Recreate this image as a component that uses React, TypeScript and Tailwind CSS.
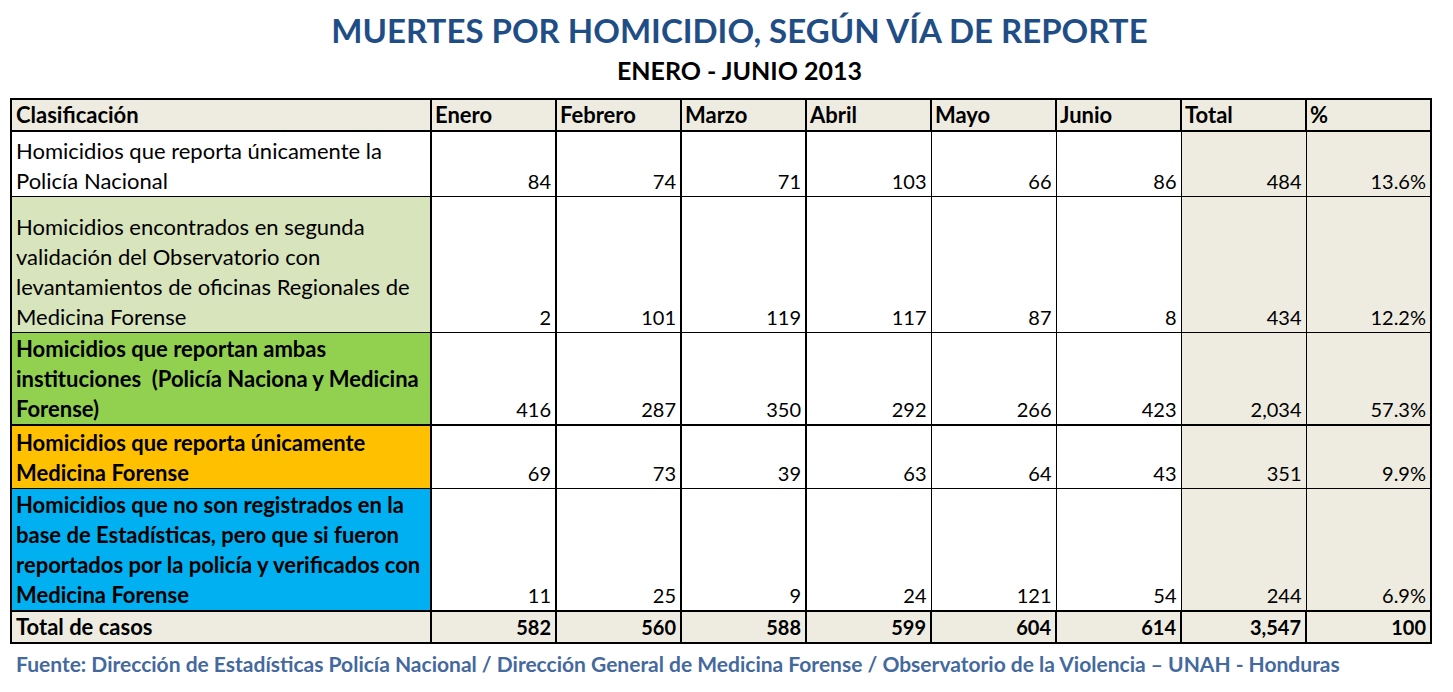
const months = ['Enero', 'Febrero', 'Marzo', 'Abril', 'Mayo', 'Junio'];

type Row = {
  label: string[];
  bold?: boolean;
  bg: string;
  values: string[];
  total: string;
  pct: string;
  h: string;
  thickTop?: boolean;
};

const rows: Row[] = [
  {
    label: ['Homicidios que reporta únicamente la', 'Policía Nacional'],
    bg: 'bg-white',
    values: ['84', '74', '71', '103', '66', '86'],
    total: '484',
    pct: '13.6%',
    h: 'h-[65px]',
  },
  {
    label: [
      'Homicidios encontrados en segunda',
      'validación del Observatorio con',
      'levantamientos de oficinas Regionales de',
      'Medicina Forense',
    ],
    bg: 'bg-[#d8e4bc]',
    values: ['2', '101', '119', '117', '87', '8'],
    total: '434',
    pct: '12.2%',
    h: 'h-[136px]',
  },
  {
    label: ['Homicidios que reportan ambas', 'instituciones  (Policía Naciona y Medicina', 'Forense)'],
    bold: true,
    bg: 'bg-[#92d050]',
    values: ['416', '287', '350', '292', '266', '423'],
    total: '2,034',
    pct: '57.3%',
    h: 'h-[93px]',
  },
  {
    label: ['Homicidios que reporta únicamente', 'Medicina Forense'],
    bold: true,
    bg: 'bg-[#ffc000]',
    values: ['69', '73', '39', '63', '64', '43'],
    total: '351',
    pct: '9.9%',
    h: 'h-[63px]',
    thickTop: true,
  },
  {
    label: [
      'Homicidios que no son registrados en la',
      'base de Estadísticas, pero que si fueron',
      'reportados por la policía y verificados con',
      'Medicina Forense',
    ],
    bold: true,
    bg: 'bg-[#00b0f0]',
    values: ['11', '25', '9', '24', '121', '54'],
    total: '244',
    pct: '6.9%',
    h: 'h-[123px]',
  },
];

const totals = ['582', '560', '588', '599', '604', '614', '3,547', '100'];

export default function App() {
  return (
    <div className="w-[1453px] h-[692px] bg-white font-['Lato',sans-serif] text-black">
      <h1 className="pt-[10px] pl-[26px] text-center text-[33px] leading-[40px] font-bold text-[#1f4e86]">
        MUERTES POR HOMICIDIO, SEGÚN VÍA DE REPORTE
      </h1>
      <h2 className="mt-[5px] pl-[26px] text-center text-[25px] leading-[30px] font-bold">ENERO - JUNIO 2013</h2>

      <table className="ml-[10px] mt-[13px] w-[1420px] table-fixed border-collapse border-2 border-black text-[20px] leading-[30px]">
        <colgroup>
          <col className="w-[420px]" />
          {months.map((m) => (
            <col key={m} className="w-[125px]" />
          ))}
          <col className="w-[125px]" />
          <col className="w-[125px]" />
        </colgroup>
        <thead>
          <tr className="h-[32px] bg-[#eeece1]">
            <th className="border-2 border-black px-[4px] py-0 text-left text-[22px] font-bold">Clasificación</th>
            {[...months, 'Total', '%'].map((m) => (
              <th key={m} className="border-2 border-black px-[3px] py-0 text-left text-[22px] font-bold">
                {m}
              </th>
            ))}
          </tr>
        </thead>
        <tbody>
          {rows.map((r, i) => (
            <tr key={i} className={`${r.h} ${r.thickTop ? 'border-t-2' : 'border-t'} border-black`}>
              <td
                className={`${r.bg} border-r-2 border-black px-[4px] py-0 align-bottom text-[22px] leading-[30px] ${r.bold ? 'font-bold' : ''}`}
              >
                {r.label.map((l, j) => (
                  <div key={j} className="whitespace-pre">
                    {l}
                  </div>
                ))}
              </td>
              {r.values.map((v, j) => (
                <td
                  key={j}
                  className={`${j < 3 ? 'border-r-2' : 'border-r'} border-black px-[4px] py-0 text-right align-bottom`}
                >
                  {v}
                </td>
              ))}
              <td className="border-r border-black bg-[#eeece1] px-[4px] py-0 text-right align-bottom">{r.total}</td>
              <td className="bg-[#eeece1] px-[4px] py-0 text-right align-bottom">{r.pct}</td>
            </tr>
          ))}
          <tr className="h-[31px] border-t-2 border-black bg-[#eeece1] font-bold">
            <td className="border-r-2 border-black px-[4px] py-0 text-[22px]">Total de casos</td>
            {totals.map((t, j) => (
              <td key={j} className="border-r-2 border-black px-[4px] py-0 text-right">
                {t}
              </td>
            ))}
          </tr>
        </tbody>
      </table>

      <p className="mt-[6px] pl-[16px] text-[21px] leading-[28px] font-bold text-[#44699e]">
        Fuente: Dirección de Estadísticas Policía Nacional / Dirección General de Medicina Forense / Observatorio de la
        Violencia – UNAH - Honduras
      </p>
    </div>
  );
}
